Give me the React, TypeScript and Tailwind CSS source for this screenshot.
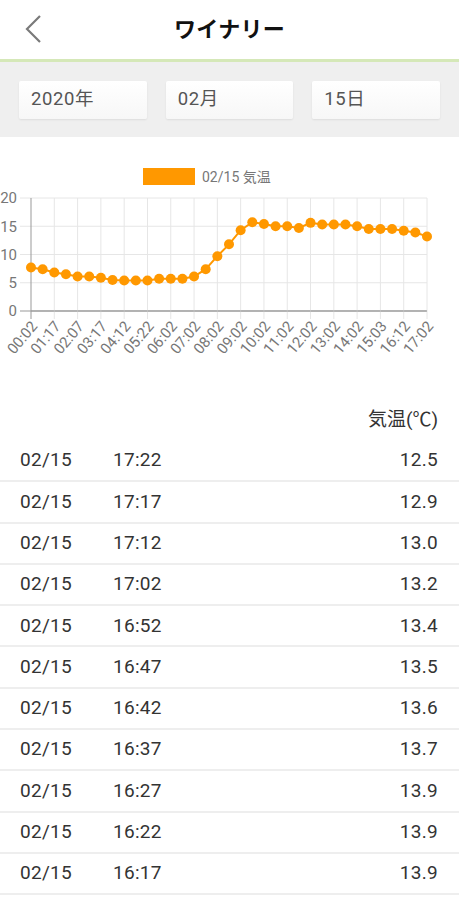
import React from "react";

const vals = [7.7,7.4,6.8,6.5,6.1,6.1,5.9,5.5,5.4,5.4,5.4,5.7,5.7,5.7,6.1,7.4,9.7,11.8,14.3,15.7,15.4,15.0,15.0,14.7,15.6,15.3,15.3,15.3,15.0,14.5,14.5,14.5,14.2,13.9,13.2];
const labels = ["00:02","01:17","02:07","03:17","04:12","05:22","06:02","07:02","08:02","09:02","10:02","11:02","12:02","13:02","14:02","15:03","16:12","17:02"];
const rows: [string, string][] = [
  ["17:22","12.5"],["17:17","12.9"],["17:12","13.0"],["17:02","13.2"],["16:52","13.4"],["16:47","13.5"],
  ["16:42","13.6"],["16:37","13.7"],["16:27","13.9"],["16:22","13.9"],["16:17","13.9"],
];

const FONT = "Roboto, 'Noto Sans CJK JP', sans-serif";
const OY = 137;
const X0 = 31, X1 = 427, YB = 311, YT = 198;
const yv = (v: number) => YB - (v * (YB - YT)) / 20 - OY;
const xp = (j: number) => X0 + (j * (X1 - X0)) / 34;
const xt = (i: number) => X0 + (i * (X1 - X0)) / 17;

function Chart() {
  const pts = vals.map((v, j) => `${xp(j)},${yv(v)}`).join(" ");
  return (
    <svg width={459} height={263} className="block" style={{ fontFamily: FONT }}>
      <rect x={143} y={168 - OY} width={52} height={17} fill="#ff9800" />
      <text x={202} y={182 - OY} fontSize={14} fill="#777">02/15 気温</text>
      {[0, 5, 10, 15, 20].map((v) => (
        <g key={v}>
          <line x1={20} x2={X1} y1={yv(v)} y2={yv(v)} stroke={v === 0 ? "#999" : "#e6e6e6"} strokeWidth={1} />
          <text x={17} y={yv(v)} dy="0.36em" textAnchor="end" fontSize={15} fill="#777">{v}</text>
        </g>
      ))}
      {labels.map((l, i) => (
        <g key={l}>
          <line x1={xt(i)} x2={xt(i)} y1={YT - OY} y2={YB + 8 - OY} stroke={i === 0 ? "#999" : "#e6e6e6"} strokeWidth={1} />
          <text
            transform={`translate(${xt(i) + 3},${YB + 12 - OY}) rotate(-50)`}
            textAnchor="end"
            dy="0.36em"
            fontSize={15}
            fill="#777"
          >
            {l}
          </text>
        </g>
      ))}
      <line x1={X0} x2={X1} y1={YB - OY} y2={YB - OY} stroke="#999" strokeWidth={1} />
      <polyline points={pts} fill="none" stroke="#ff9800" strokeWidth={2} />
      {vals.map((v, j) => (
        <circle key={j} cx={xp(j)} cy={yv(v)} r={5} fill="#ff9800" />
      ))}
    </svg>
  );
}

export default function App() {
  return (
    <div className="w-[459px] h-[900px] bg-white overflow-hidden" style={{ fontFamily: FONT }}>
      <div className="relative h-[59px] flex items-center justify-center">
        <svg className="absolute left-[23px] top-[14px]" width={20} height={30} viewBox="0 0 20 30">
          <polyline points="17,2 4,15 17,28" fill="none" stroke="#7a7a7a" strokeWidth={2.2} />
        </svg>
        <span className="text-[22px] font-bold text-[#111] tracking-[0.3px]">ワイナリー</span>
      </div>
      <div className="h-[3px] bg-[#d5e8b8]" />
      <div className="h-[75px] bg-[#efefef] flex items-center gap-[19px] px-[19px]">
        {["2020年", "02月", "15日"].map((t) => (
          <div
            key={t}
            className="flex-1 h-[38px] rounded-[2px] bg-gradient-to-b from-[#ffffff] to-[#f7f7f7] shadow-[0_1px_2px_rgba(0,0,0,0.08)] flex items-center pl-[12px] text-[18.5px] tracking-[0.6px] text-[#555]"
          >
            {t}
          </div>
        ))}
      </div>
      <Chart />
      <div className="h-[41px] flex items-center justify-end pr-[21px] text-[19px] text-[#333]">気温(℃)</div>
      {rows.map(([t, v]) => (
        <div key={t} className="h-[41.3px] border-b-2 border-[#eeeeee] flex items-center pl-[20px] pr-[21px] text-[19px] tracking-[0.3px] text-[#333]">
          <span className="w-[93px]">02/15</span>
          <span className="flex-1">{t}</span>
          <span>{v}</span>
        </div>
      ))}
    </div>
  );
}
